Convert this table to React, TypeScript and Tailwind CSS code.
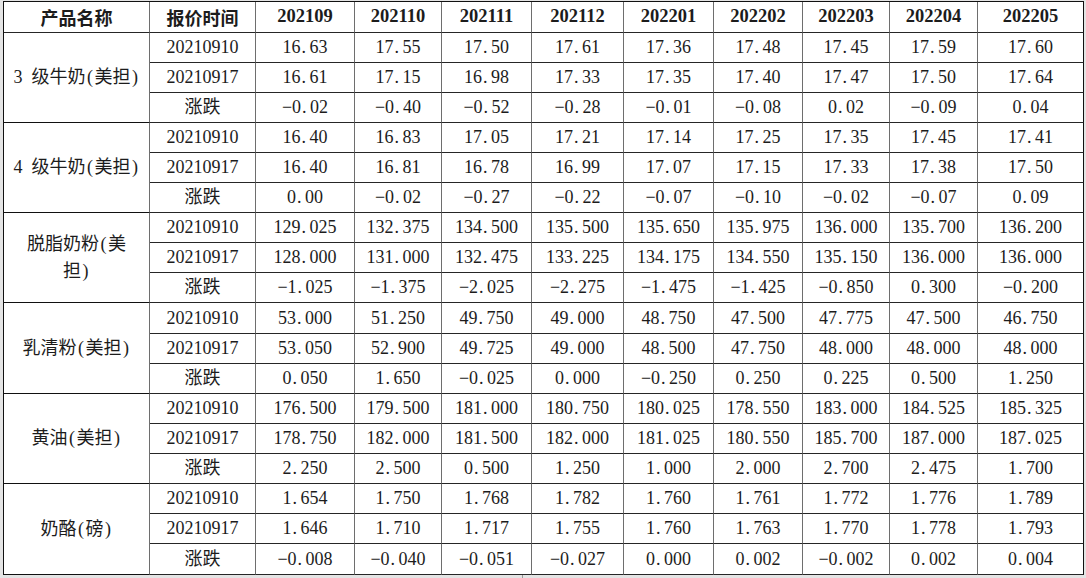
const months = ["202109", "202110", "202111", "202112", "202201", "202202", "202203", "202204", "202205"];

type Group = { name: string[]; a: string[]; b: string[]; d: string[] };

const groups: Group[] = [
  {
    name: ["3 级牛奶(美担)"],
    a: ["16.63", "17.55", "17.50", "17.61", "17.36", "17.48", "17.45", "17.59", "17.60"],
    b: ["16.61", "17.15", "16.98", "17.33", "17.35", "17.40", "17.47", "17.50", "17.64"],
    d: ["-0.02", "-0.40", "-0.52", "-0.28", "-0.01", "-0.08", "0.02", "-0.09", "0.04"],
  },
  {
    name: ["4 级牛奶(美担)"],
    a: ["16.40", "16.83", "17.05", "17.21", "17.14", "17.25", "17.35", "17.45", "17.41"],
    b: ["16.40", "16.81", "16.78", "16.99", "17.07", "17.15", "17.33", "17.38", "17.50"],
    d: ["0.00", "-0.02", "-0.27", "-0.22", "-0.07", "-0.10", "-0.02", "-0.07", "0.09"],
  },
  {
    name: ["脱脂奶粉(美", "担)"],
    a: ["129.025", "132.375", "134.500", "135.500", "135.650", "135.975", "136.000", "135.700", "136.200"],
    b: ["128.000", "131.000", "132.475", "133.225", "134.175", "134.550", "135.150", "136.000", "136.000"],
    d: ["-1.025", "-1.375", "-2.025", "-2.275", "-1.475", "-1.425", "-0.850", "0.300", "-0.200"],
  },
  {
    name: ["乳清粉(美担)"],
    a: ["53.000", "51.250", "49.750", "49.000", "48.750", "47.500", "47.775", "47.500", "46.750"],
    b: ["53.050", "52.900", "49.725", "49.000", "48.500", "47.750", "48.000", "48.000", "48.000"],
    d: ["0.050", "1.650", "-0.025", "0.000", "-0.250", "0.250", "0.225", "0.500", "1.250"],
  },
  {
    name: ["黄油(美担)"],
    a: ["176.500", "179.500", "181.000", "180.750", "180.025", "178.550", "183.000", "184.525", "185.325"],
    b: ["178.750", "182.000", "181.500", "182.000", "181.025", "180.550", "185.700", "187.000", "187.025"],
    d: ["2.250", "2.500", "0.500", "1.250", "1.000", "2.000", "2.700", "2.475", "1.700"],
  },
  {
    name: ["奶酪(磅)"],
    a: ["1.654", "1.750", "1.768", "1.782", "1.760", "1.761", "1.772", "1.776", "1.789"],
    b: ["1.646", "1.710", "1.717", "1.755", "1.760", "1.763", "1.770", "1.778", "1.793"],
    d: ["-0.008", "-0.040", "-0.051", "-0.027", "0.000", "0.002", "-0.002", "0.002", "0.004"],
  },
];

// shared cell look: right + bottom rule, centred text
const cell =
  "flex items-center justify-center border-r border-b border-r-[#6e6e6e] border-b-[#262626] whitespace-nowrap";

// half-width period like the original SimSun rendering
function Num({ v }: { v: string }) {
  const [i, f] = v.replace("-", "\u2212").split(".");
  return (
    <span>
      {i}
      <span className="inline-block w-[9px] pl-[1px] text-left">.</span>
      {f}
    </span>
  );
}

// ASCII chars take a fixed half-width slot, as in the original
function Name({ text }: { text: string }) {
  return (
    <span>
      {Array.from(text).map((ch, i) =>
        /[\x20-\x7e]/.test(ch) ? (
          <span key={i} className="inline-block w-[9px] text-center">
            {ch === " " ? "\u00a0" : ch}
          </span>
        ) : (
          <span key={i}>{ch}</span>
        ),
      )}
    </span>
  );
}

export default function App() {
  return (
    <div className="relative h-[578px] w-[1086px] overflow-hidden bg-[#e4e4e4] pt-[1px] pl-[3px] font-['Liberation_Serif','Noto_Sans_CJK_SC',serif] text-[18px] text-[#1c1c1c]">
      <div className="grid w-[1081px] grid-cols-[146px_106px_99px_87px_90px_92px_90px_89px_87px_88px_106px] grid-rows-[31px_repeat(9,30px)_31px_repeat(7,30px)_31px] border-t border-l border-[#111] bg-white">
        <div className={`${cell} font-['Noto_Sans_CJK_SC',sans-serif] font-bold`}>产品名称</div>
        <div className={`${cell} font-['Noto_Sans_CJK_SC',sans-serif] font-bold`}>报价时间</div>
        {months.map((m, i) => (
          <div
            key={m}
            className={`${cell} text-[18.5px] font-bold ${i === months.length - 1 ? "border-r-[#111]" : ""}`}
          >
            {m}
          </div>
        ))}

        {groups.map((g, gi) => {
          const last = gi === groups.length - 1;
          const rows: [string, string[]][] = [
            ["20210910", g.a],
            ["20210917", g.b],
            ["涨跌", g.d],
          ];
          return [
            <div
              key={`n${gi}`}
              style={{ gridRow: `span 3 / span 3`, gridColumnStart: 1 }}
              className="flex flex-col items-center justify-center border-r border-b border-r-[#6e6e6e] border-b-[#111] leading-[27px] whitespace-nowrap"
            >
              {g.name.map((line) => (
                <Name key={line} text={line} />
              ))}
            </div>,
            ...rows.flatMap(([label, vals], ri) => {
              const bottom = last && ri === 2 ? "border-b-[#111]" : "";
              return [
                <div key={`l${gi}${ri}`} style={{ gridColumnStart: 2 }} className={`${cell} ${bottom}`}>
                  {label}
                </div>,
                ...vals.map((v, vi) => (
                  <div
                    key={`v${gi}${ri}${vi}`}
                    className={`${cell} ${bottom} ${vi === vals.length - 1 ? "border-r-[#111]" : ""}`}
                  >
                    <Num v={v} />
                  </div>
                )),
              ];
            }),
          ];
        })}
      </div>
      <div className="absolute top-[575px] left-[522px] h-[3px] w-px bg-[#9a9a9a]" />
    </div>
  );
}
